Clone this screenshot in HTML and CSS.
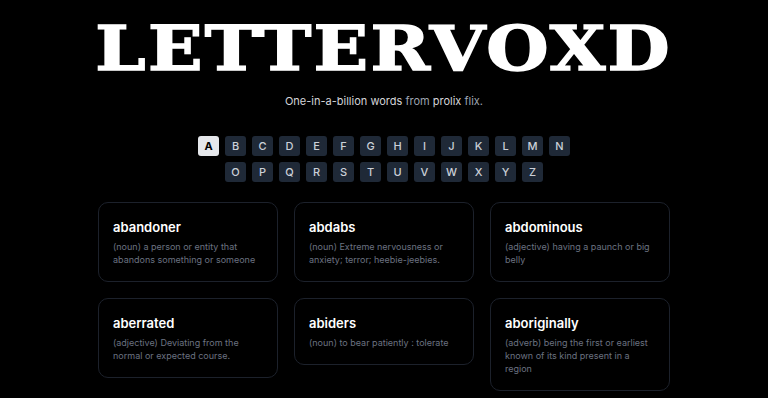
FILE: index.html
```html
<!DOCTYPE html>
<html lang="en">
<head>
<meta charset="utf-8">
<title>Lettervoxd</title>
<link rel="stylesheet" href="styles.css">
</head>
<body>
<main class="page">
  <h1 class="logo">LETTERVOXD</h1>
  <p class="tagline"><span class="hi">One-in-a-billion words</span> <span class="lo">from</span> <span class="hi">prolix</span> <span class="lo">flix.</span></p>
  <nav class="letters">
    <a class="letter active">A</a><a class="letter">B</a><a class="letter">C</a><a class="letter">D</a><a class="letter">E</a><a class="letter">F</a><a class="letter">G</a><a class="letter">H</a><a class="letter">I</a><a class="letter">J</a><a class="letter">K</a><a class="letter">L</a><a class="letter">M</a><a class="letter">N</a><a class="letter">O</a><a class="letter">P</a><a class="letter">Q</a><a class="letter">R</a><a class="letter">S</a><a class="letter">T</a><a class="letter">U</a><a class="letter">V</a><a class="letter">W</a><a class="letter">X</a><a class="letter">Y</a><a class="letter">Z</a>
  </nav>
  <section class="grid">
    <article class="card"><h2 class="word">abandoner</h2><p class="def">(noun) a person or entity that abandons something or someone</p></article>
    <article class="card"><h2 class="word">abdabs</h2><p class="def">(noun) Extreme nervousness or anxiety; terror; heebie-jeebies.</p></article>
    <article class="card"><h2 class="word">abdominous</h2><p class="def">(adjective) having a paunch or big belly</p></article>
    <article class="card"><h2 class="word">aberrated</h2><p class="def">(adjective) Deviating from the normal or expected course.</p></article>
    <article class="card"><h2 class="word">abiders</h2><p class="def">(noun) to bear patiently : tolerate</p></article>
    <article class="card"><h2 class="word">aboriginally</h2><p class="def">(adverb) being the first or earliest known of its kind present in a region</p></article>
  </section>
</main>
</body>
</html>
```
FILE: styles.css
```css
html, body {
  margin: 0;
  padding: 0;
  background: #000;
  color: #fff;
  font-family: Inter, "Noto Sans", sans-serif;
}
.page {
  display: flex;
  flex-direction: column;
  align-items: center;
}
.logo {
  margin: 18px 0 0;
  font-family: "DejaVu Serif", serif;
  font-weight: 700;
  font-size: 62px;
  line-height: 62px;
  letter-spacing: 2px;
  color: #fff;
  -webkit-text-stroke: 1.5px #fff;
  transform: scaleX(1.155);
}
.tagline {
  margin: 12px 0 0;
  font-size: 11px;
  line-height: 18px;
}
.hi { color: #d4d4d8; }
.lo { color: #9ca3af; }
.letters {
  margin-top: 26px;
  width: 384px;
  display: flex;
  flex-wrap: wrap;
  justify-content: center;
  gap: 6px;
}
.letter {
  min-width: 21px;
  box-sizing: border-box;
  height: 20px;
  padding: 0 5px;
  border-radius: 3px;
  background: #1f2937;
  color: #cbd0d8;
  font-size: 11px;
  font-weight: 500;
  line-height: 20px;
  text-align: center;
}
.letter.active {
  background: #e5e7eb;
  color: #000;
  font-weight: 700;
}
.grid {
  margin-top: 20px;
  width: 572px;
  display: grid;
  grid-template-columns: repeat(3, 1fr);
  gap: 16px;
  align-items: start;
}
.card {
  border: 1px solid #1c212b;
  border-radius: 10px;
  padding: 15px 14px;
}
.word {
  margin: 0 0 4px;
  font-size: 13px;
  line-height: 18px;
  font-weight: 600;
  color: #fff;
}
.def {
  margin: 0;
  font-size: 9px;
  line-height: 13px;
  color: #6b7280;
}
```
